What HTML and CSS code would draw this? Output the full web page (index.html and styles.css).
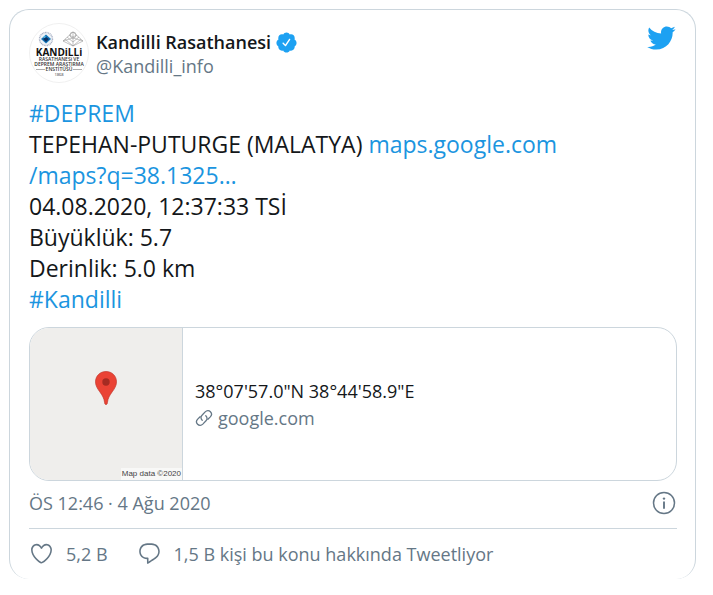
FILE: index.html
```html
<!DOCTYPE html>
<html lang="tr">
<head>
    <meta charset="UTF-8">
    <meta name="viewport" content="width=device-width, initial-scale=1.0">
    <title>Kandilli Rasathanesi</title>
    <link rel="stylesheet" href="styles.css">
</head>
<body>

<article class="tweet">
    <header class="tweet-header">
        <a class="avatar" href="#" aria-label="Kandilli Rasathanesi">
            <svg viewBox="0 0 60 60">
                <circle cx="30" cy="30" r="29.5" fill="#fff" stroke="#f0f0f0"/>
                <circle cx="17" cy="16" r="6.5" fill="#eef3f8" stroke="#a9b0c4" stroke-width="1.4" stroke-dasharray="1 .6"/>
                <path d="M17 11.500l5 4.500-5 4.500-5-4.500z" fill="#1274b8"/>
                <path d="M17 14l3 2-3 3-3-3z" fill="#0a2f60"/>
                <path d="M14 14l2-1 1 1-2 1z" fill="#63c3e8"/>
                <g fill="none" stroke="#999" stroke-width=".6">
                    <path d="M44 9l10 9-10 5-10-5zM44 9v14M34 18l10-3 10 3M38 14l6 5 6-5M36 16l8 7 8-7M40 12l4 2 4-2"/>
                    <circle cx="44" cy="12" r="3"/>
                </g>
                <g class="logo-text" text-anchor="middle">
                    <text class="logo-name" x="30" y="33">KANDiLLi</text>
                    <text x="30" y="38">RASATHANESi VE</text>
                    <text x="30" y="43">DEPREM ARAŞTIRMA</text>
                    <text x="30" y="48">ENSTİTÜSÜ</text>
                    <text class="logo-year" x="30" y="53">1868</text>
                </g>
                <path d="M7 46.500h9M44 46.500h9" stroke="#888" stroke-width=".7"/>
            </svg>
        </a>
        <div class="author">
            <a class="author-name" href="#">
                <span>Kandilli Rasathanesi</span>
                <svg class="verified" viewBox="0 0 24 24" aria-hidden="true"><path d="M22.500 12.500c0-1.580-.875-2.950-2.148-3.600.154-.435.238-.905.238-1.400 0-2.210-1.710-3.998-3.818-3.998-.470 0-.920.084-1.336.250C14.818 2.415 13.510 1.500 12 1.500s-2.816.917-3.437 2.250c-.415-.165-.866-.250-1.336-.250-2.110 0-3.818 1.790-3.818 4 0 .494.083.964.237 1.400-1.272.650-2.147 2.018-2.147 3.600 0 1.495.782 2.798 1.942 3.486-.020.170-.032.340-.032.514 0 2.210 1.708 4 3.818 4 .470 0 .920-.086 1.335-.250.620 1.334 1.926 2.250 3.437 2.250 1.512 0 2.818-.916 3.437-2.250.415.163.865.248 1.336.248 2.110 0 3.818-1.790 3.818-4 0-.174-.012-.344-.033-.513 1.158-.687 1.943-1.990 1.943-3.484zm-6.616-3.334l-4.334 6.500c-.145.217-.382.334-.625.334-.143 0-.288-.040-.416-.126l-.115-.094-2.415-2.415c-.293-.293-.293-.768 0-1.060s.768-.294 1.060 0l1.770 1.767 3.825-5.740c.230-.345.696-.436 1.040-.207.346.230.440.696.210 1.040z"/></svg>
            </a>
            <a class="author-handle" href="#">@Kandilli_info</a>
        </div>
        <a class="bird" href="#" aria-label="Twitter">
            <svg viewBox="0 0 24 24"><path d="M23.643 4.937c-.835.370-1.732.620-2.675.733.962-.576 1.700-1.490 2.048-2.578-.900.534-1.897.922-2.958 1.130-.850-.904-2.060-1.470-3.400-1.470-2.572 0-4.658 2.086-4.658 4.660 0 .364.042.718.120 1.060-3.873-.195-7.304-2.050-9.602-4.868-.400.690-.630 1.490-.630 2.342 0 1.616.823 3.043 2.072 3.878-.764-.025-1.482-.234-2.110-.583v.060c0 2.257 1.605 4.140 3.737 4.568-.392.106-.803.162-1.227.162-.300 0-.593-.028-.877-.082.593 1.850 2.313 3.198 4.352 3.234-1.595 1.250-3.604 1.995-5.786 1.995-.376 0-.747-.022-1.112-.065 2.062 1.323 4.510 2.093 7.140 2.093 8.570 0 13.255-7.098 13.255-13.254 0-.200-.005-.402-.014-.602.910-.658 1.700-1.477 2.323-2.410z"/></svg>
        </a>
    </header>

    <div class="tweet-text">
        <p><a href="#">#DEPREM</a></p>
        <p>TEPEHAN-PUTURGE (MALATYA) <a href="#">maps.google.com</a></p>
        <p><a href="#">/maps?q=38.1325…</a></p>
        <p>04.08.2020, 12:37:33 TSİ</p>
        <p>Büyüklük: 5.7</p>
        <p>Derinlik: 5.0 km</p>
        <p><a href="#">#Kandilli</a></p>
    </div>

    <a class="map-card" href="#">
        <div class="map">
            <svg class="pin" viewBox="0 0 22 34" aria-hidden="true">
                <path d="M11 .500C5 .500.500 5 .500 10.800c0 3.700 1.800 6.600 4.200 9.900 2.700 3.800 4.500 6.500 4.900 11 .100 1.200.500 1.800 1.400 1.800s1.300-.600 1.400-1.800c.400-4.500 2.200-7.200 4.900-11 2.400-3.300 4.200-6.200 4.200-9.900C21.500 5 17 .500 11 .500z" fill="#ea4335" stroke="#c23a2e" stroke-width=".7"/>
                <circle cx="11" cy="11" r="3.700" fill="#a52b22"/>
            </svg>
            <span class="map-credit">Map data ©2020</span>
        </div>
        <div class="map-info">
            <span class="map-title">38°07'57.0"N 38°44'58.9"E</span>
            <span class="map-domain">
                <svg class="link-icon" viewBox="0 0 18 18" aria-hidden="true">
                    <path d="M7.200 11.200C5.600 9.700 5.600 7.700 7 6.300l3.200-3.400c1.500-1.500 3.800-1.600 5.200-.200s1.300 3.700-.100 5.200l-2.400 2.400"/>
                    <path d="M10.800 6.800c1.600 1.500 1.600 3.500.200 4.900l-3.200 3.400c-1.500 1.500-3.800 1.600-5.200.200s-1.300-3.700.100-5.200l2.400-2.400"/>
                </svg>
                google.com
            </span>
        </div>
    </a>

    <div class="tweet-meta">
        <a class="time" href="#">ÖS 12:46 · 4 Ağu 2020</a>
        <a class="info" href="#" aria-label="Bilgi">
            <svg viewBox="0 0 24 24">
                <circle cx="12" cy="12" r="10.500" fill="none" stroke="currentColor" stroke-width="1.500"/>
                <circle cx="12" cy="7.600" r="1.200"/>
                <path d="M12 11.200v5.800" stroke="currentColor" stroke-width="1.900" stroke-linecap="round"/>
            </svg>
        </a>
    </div>

    <footer class="tweet-actions">
        <a class="action" href="#">
            <svg viewBox="0 0 24 24" aria-hidden="true"><path d="M12 21.638h-.014C9.403 21.590 1.950 14.856 1.950 8.478c0-3.064 2.525-5.754 5.403-5.754 2.290 0 3.830 1.580 4.646 2.730.814-1.148 2.354-2.730 4.645-2.730 2.880 0 5.404 2.690 5.404 5.755 0 6.376-7.454 13.110-10.037 13.157H12zM7.354 4.225c-2.080 0-3.903 1.988-3.903 4.255 0 5.740 7.034 11.596 8.550 11.658 1.518-.062 8.550-5.917 8.550-11.658 0-2.267-1.823-4.255-3.903-4.255-2.528 0-3.940 2.936-3.952 2.965-.230.562-1.156.562-1.387 0-.014-.030-1.425-2.965-3.954-2.965z"/></svg>
            <span>5,2 B</span>
        </a>
        <a class="action" href="#">
            <svg viewBox="0 0 24 24" aria-hidden="true"><path d="M14.046 2.242l-4.148-.010h-.002c-4.374 0-7.800 3.427-7.800 7.802 0 4.098 3.186 7.206 7.465 7.370v3.828c0 .108.044.286.120.403.142.225.384.347.632.347.138 0 .277-.038.402-.118.264-.168 6.473-4.140 8.088-5.506 1.902-1.610 3.040-3.970 3.043-6.312v-.017c-.006-4.367-3.430-7.787-7.800-7.788zm3.787 12.972c-1.134.960-4.862 3.405-6.772 4.643V16.670c0-.414-.335-.750-.750-.750h-.396c-3.660 0-6.318-2.476-6.318-5.886 0-3.534 2.768-6.302 6.300-6.302l4.147.010h.002c3.532 0 6.300 2.766 6.302 6.296-.003 1.910-.942 3.844-2.514 5.176z"/></svg>
            <span>1,5 B kişi bu konu hakkında Tweetliyor</span>
        </a>
    </footer>
</article>

</body>
</html>
```

FILE: styles.css
```css
* {
    box-sizing: border-box;
}

body {
    font-family: "Open Sans", "Noto Sans", sans-serif;
    font-size: 18px;
    line-height: 24px;
    background-color: #fff;
    color: #14171a;
    margin: 0;
    padding: 9px 17px 16px 9px;
}

a {
    color: #1b95e0;
    text-decoration: none;
}

svg {
    display: block;
    fill: currentColor;
}

.tweet {
    border: 1px solid #ccd6dd;
    border-bottom: 0;
    border-radius: 20px;
    padding: 13px 18px 13px 19px;
}

.tweet-header {
    display: flex;
    align-items: flex-start;
}

.avatar svg {
    width: 60px;
    height: 60px;
}

.logo-text {
    font-family: "Open Sans", sans-serif;
    font-size: 5px;
    font-weight: 600;
    fill: #333;
}

.logo-name {
    font-size: 10px;
    font-weight: bold;
    fill: #111;
}

.logo-year {
    font-size: 4px;
    font-weight: normal;
}

.author {
    flex: 1;
    margin-left: 7px;
    padding-top: 7px;
}

.author-name {
    display: flex;
    align-items: center;
    gap: 4px;
    color: #14171a;
    font-weight: 600;
}

.verified {
    width: 23px;
    height: 23px;
    color: #1da1f2;
}

.author-handle {
    display: block;
    color: #657786;
}

.bird {
    padding: 0 1px 0 0;
    color: #1da1f2;
}

.bird svg {
    width: 30px;
    height: 30px;
}

.tweet-text {
    margin: 15px 0 12px;
    font-size: 23px;
    line-height: 31px;
}

.tweet-text p {
    margin: 0;
}

.map-card {
    display: flex;
    border: 1px solid #ccd6dd;
    border-radius: 20px;
    overflow: hidden;
}

.map {
    position: relative;
    display: flex;
    justify-content: center;
    width: 153px;
    height: 152px;
    padding-top: 43px;
    background-color: #efeeec;
    border-right: 1px solid #ccd6dd;
}

.pin {
    width: 22px;
    height: 34px;
}

.map-credit {
    position: absolute;
    right: 0;
    bottom: 0;
    padding: 0 1px;
    background-color: #f8f8f7;
    color: #444;
    font-family: "Liberation Sans", sans-serif;
    font-size: 8px;
    line-height: 12px;
}

.map-info {
    flex: 1;
    display: flex;
    flex-direction: column;
    justify-content: center;
    gap: 3px;
    padding: 0 12px;
}

.map-title {
    color: #14171a;
}

.map-domain {
    display: flex;
    align-items: center;
    gap: 5px;
    color: #657786;
}

.link-icon {
    width: 18px;
    height: 18px;
    fill: none;
    stroke: currentColor;
    stroke-width: 1.3;
    stroke-linecap: round;
}

.tweet-meta {
    display: flex;
    justify-content: space-between;
    align-items: center;
    padding: 10px 0 13px;
    border-bottom: 1px solid #ccd6dd;
}

.tweet-meta a {
    color: #657786;
}

.info {
    padding-right: 1px;
}

.info svg {
    width: 24px;
    height: 24px;
}

.tweet-actions {
    display: flex;
    gap: 29px;
    padding-top: 12px;
}

.action {
    display: flex;
    align-items: center;
    gap: 12px;
    color: #657786;
}

.action svg {
    width: 25px;
    height: 25px;
}
```
